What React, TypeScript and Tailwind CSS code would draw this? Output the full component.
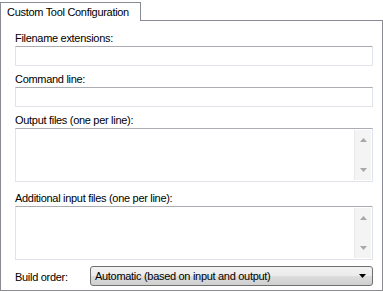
const font = { fontFamily: '"Liberation Sans", Arial, sans-serif' };

function TextBox() {
  return <div className="h-5 w-full border border-[#e2e3ea] border-t-[#abadb3] bg-white" />;
}

function ScrollBox() {
  return (
    <div className="relative h-[54px] w-full border border-[#e2e3ea] border-t-[#abadb3] bg-white">
      <div className="absolute right-px top-px bottom-px flex w-[17px] flex-col items-center justify-between border-l border-[#e8e8e8] bg-[#f4f4f4] py-[8px]">
        <svg width="7" height="4" viewBox="0 0 7 4">
          <path d="M3.5 0 L7 4 L0 4 Z" fill="#a8a8a8" />
        </svg>
        <svg width="7" height="4" viewBox="0 0 7 4">
          <path d="M0 0 L7 0 L3.5 4 Z" fill="#a8a8a8" />
        </svg>
      </div>
    </div>
  );
}

export default function App() {
  return (
    <div className="h-[292px] w-[383px] bg-white pt-[2px] text-[11px] leading-[14px] tracking-[-0.3px] text-black" style={font}>
      {/* TAB */}
      <div className="relative z-10 -mb-px flex h-[19px] w-[141px] items-start border border-b-0 border-[#898c95] bg-white pl-[6px] pt-[2px]">
        Custom Tool Configuration
      </div>

      {/* PANEL */}
      <div className="flex h-[271px] w-[383px] flex-col border border-[#898c95] pl-[14px] pr-[9px] pt-[10px]">
        <div>Filename extensions:</div>
        <div className="mt-px"><TextBox /></div>

        <div className="mt-[6px]">Command line:</div>
        <div className="mt-px"><TextBox /></div>

        <div className="mt-[6px]">Output files (one per line):</div>
        <div className="mt-px"><ScrollBox /></div>

        <div className="mt-[9px]">Additional input files (one per line):</div>
        <div className="mt-px"><ScrollBox /></div>

        <div className="mt-[6px] flex h-5 items-center">
          <div className="w-[75px] pt-[2px]">Build order:</div>
          <div className="flex h-5 flex-1 items-center justify-between rounded-[3px] border border-[#707070] bg-[linear-gradient(to_bottom,#f2f2f2_0%,#ebebeb_50%,#dddddd_50%,#cfcfcf_100%)] pl-[4px] pr-[6px]">
            <span>Automatic (based on input and output)</span>
            <svg width="7" height="4" viewBox="0 0 7 4">
              <path d="M0 0 L7 0 L3.5 4 Z" fill="#000" />
            </svg>
          </div>
        </div>
      </div>
    </div>
  );
}
